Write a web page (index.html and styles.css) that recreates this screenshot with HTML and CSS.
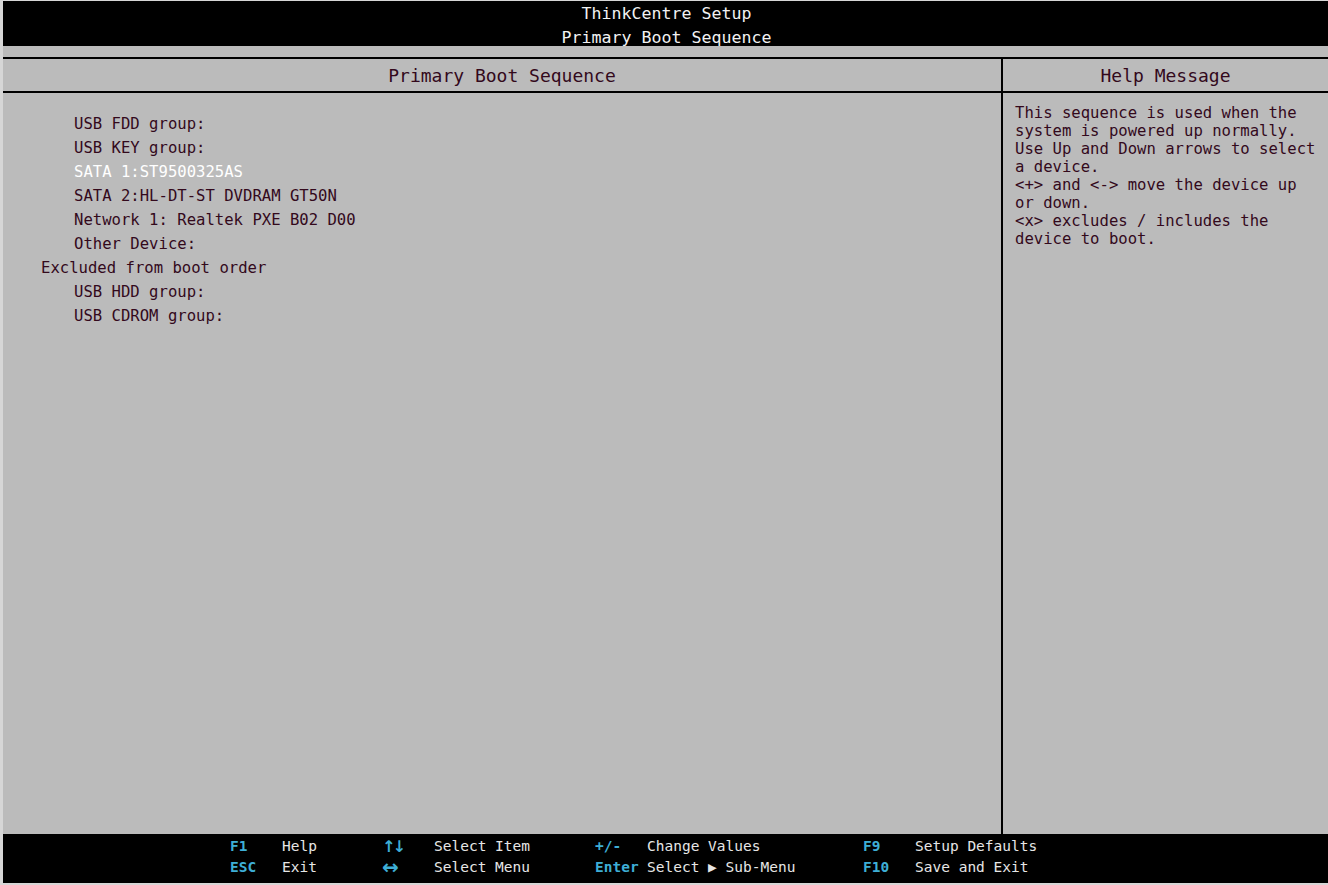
FILE: index.html
```html
<!DOCTYPE html>
<html>
<head>
<meta charset="utf-8">
<link rel="stylesheet" href="styles.css">
</head>
<body>
<div class="screen">
  <header class="top">
    <div class="top-line">ThinkCentre Setup</div>
    <div class="top-line">Primary Boot Sequence</div>
  </header>
  <main class="main">
    <section class="panel left">
      <div class="panel-head">Primary Boot Sequence</div>
      <div class="list">
        <div class="item">USB FDD group:</div>
        <div class="item">USB KEY group:</div>
        <div class="item selected">SATA 1:ST9500325AS</div>
        <div class="item">SATA 2:HL-DT-ST DVDRAM GT50N</div>
        <div class="item">Network 1: Realtek PXE B02 D00</div>
        <div class="item">Other Device:</div>
        <div class="item group">Excluded from boot order</div>
        <div class="item">USB HDD group:</div>
        <div class="item">USB CDROM group:</div>
      </div>
    </section>
    <section class="panel right">
      <div class="panel-head">Help Message</div>
      <div class="help">This sequence is used when the
system is powered up normally.
Use Up and Down arrows to select
a device.
&lt;+&gt; and &lt;-&gt; move the device up
or down.
&lt;x&gt; excludes / includes the
device to boot.</div>
    </section>
  </main>
  <footer class="keys">
    <div class="keygrid">
      <span class="k">F1</span><span class="d">Help</span>
      <span class="k arrow ud">↑↓</span><span class="d">Select Item</span>
      <span class="k">+/-</span><span class="d">Change Values</span>
      <span class="k">F9</span><span class="d">Setup Defaults</span>
      <span class="k">ESC</span><span class="d">Exit</span>
      <span class="k arrow lr">↔</span><span class="d">Select Menu</span>
      <span class="k">Enter</span><span class="d">Select ▶ Sub-Menu</span>
      <span class="k">F10</span><span class="d">Save and Exit</span>
    </div>
  </footer>
</div>
</body>
</html>
```
FILE: styles.css
```css
html, body {
  margin: 0;
  padding: 0;
  height: 100%;
}
body {
  background: #d6d6d6;
  font-family: "DejaVu Sans Mono", "Liberation Mono", monospace;
  overflow: hidden;
}
.screen {
  margin: 1px 0 0 3px;
  height: 882px;
  display: flex;
  flex-direction: column;
  background: #bbbbbb;
  color: #33091c;
}
.top {
  background: #000;
  color: #f2f2f2;
  height: 45px;
  padding-top: 1px;
  text-align: center;
  font-size: 16.6px;
  line-height: 24px;
  box-sizing: border-box;
}
.top-line {
  padding-left: 2px;
}
.main {
  flex: 1;
  margin-top: 11px;
  border-top: 2px solid #000;
  display: flex;
  min-height: 0;
}
.panel {
  display: flex;
  flex-direction: column;
}
.left {
  width: 998px;
  border-right: 2px solid #000;
}
.right {
  flex: 1;
}
.panel-head {
  height: 32px;
  border-bottom: 2px solid #000;
  text-align: center;
  font-size: 18px;
  line-height: 33px;
}
.list {
  padding: 19px 0 0 71px;
  font-size: 15.6px;
  line-height: 24px;
}
.item.selected {
  color: #ffffff;
}
.item.group {
  margin-left: -33px;
}
.help {
  padding: 11px 0 0 12px;
  font-size: 15.6px;
  line-height: 18px;
  white-space: pre;
}
.keys {
  background: #000;
  height: 49px;
  padding: 2px 0 0 227px;
  box-sizing: border-box;
  font-size: 14.5px;
  line-height: 21px;
}
.keygrid {
  display: grid;
  grid-template-columns: 52px 100px 52px 161px 52px 216px 52px auto;
}
.k {
  color: #3eaed6;
  font-weight: bold;
}
.k.arrow {
  font-family: "DejaVu Sans", sans-serif;
  line-height: 21px;
}
.k.ud {
  font-size: 16px;
  letter-spacing: -3px;
}
.k.lr {
  font-size: 20px;
}
.d {
  color: #e6e6e6;
}
```
